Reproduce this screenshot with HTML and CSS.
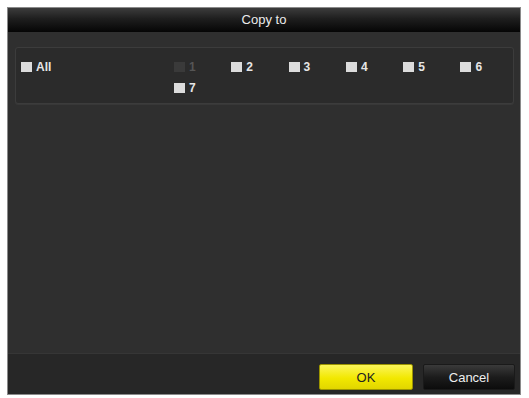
FILE: index.html
```html
<!DOCTYPE html>
<html lang="en">
<head>
    <meta charset="UTF-8">
    <meta name="viewport" content="width=device-width, initial-scale=1.0">
    <title>Copy to</title>
    <link rel="stylesheet" href="styles.css">
</head>
<body>
<div class="dialog">
    <div class="title">Copy to</div>

    <div class="content">
        <div class="panel">
            <label class="check all"><span class="box"></span>All</label>

            <div class="channels">
                <label class="check disabled"><span class="box"></span>1</label>
                <label class="check"><span class="box"></span>2</label>
                <label class="check"><span class="box"></span>3</label>
                <label class="check"><span class="box"></span>4</label>
                <label class="check"><span class="box"></span>5</label>
                <label class="check"><span class="box"></span>6</label>
                <label class="check"><span class="box"></span>7</label>
            </div>
        </div>
    </div>

    <div class="footer">
        <button class="btn ok">OK</button>
        <button class="btn cancel">Cancel</button>
    </div>
</div>
</body>
</html>
```

FILE: styles.css
```css
body {
  margin: 0;
  background-color: #fff;
  font-family: "Liberation Sans", Arial, sans-serif;
}

.dialog {
  margin: 7px 7px 0 7px;
  width: 514px;
  height: 388px;
  display: flex;
  flex-direction: column;
  background-color: #2f2f2f;
  border: 1px solid #8a8a8a;
  box-sizing: border-box;
}

.title {
  height: 24px;
  line-height: 24px;
  text-align: center;
  color: #ececec;
  font-size: 13px;
  background: linear-gradient(to bottom, #3c3c3c 0%, #1e1e1e 45%, #050505 100%);
}

.content {
  flex: 1;
  padding: 15px 6px 0 7px;
}

.panel {
  height: 57px;
  display: flex;
  align-items: flex-start;
  padding: 13px 0 0 5px;
  box-sizing: border-box;
  background-color: #2b2b2b;
  border: 1px solid #3c3c3c;
  border-radius: 3px;
  box-shadow: 0 1px 0 #383838;
}

.all {
  width: 153px;
  flex-shrink: 0;
}

.channels {
  display: grid;
  grid-template-columns: repeat(5, 57.3px) auto;
  grid-auto-rows: 21px;
}

.check {
  display: flex;
  align-items: flex-start;
  height: 12px;
  line-height: 12px;
  color: #e6e6e6;
  font-size: 12px;
  font-weight: bold;
}

.check .box {
  width: 11px;
  height: 10px;
  margin: 1px 4px 0 0;
  background-color: #dcdcdc;
}

.check.disabled {
  color: #555;
}

.check.disabled .box {
  background-color: #3a3a3a;
}

.footer {
  height: 41px;
  display: flex;
  justify-content: flex-end;
  align-items: flex-start;
  gap: 10px;
  padding: 10px 5px 0 0;
  box-sizing: border-box;
  background-color: #272727;
  border-top: 1px solid #363636;
}

.btn {
  width: 94px;
  height: 26px;
  font-family: "Liberation Sans", Arial, sans-serif;
  font-size: 13px;
  border: 1px solid #1a1a1a;
  border-radius: 2px;
  padding: 0;
}

.ok {
  color: #222;
  background: linear-gradient(to bottom, #fbf55a 0%, #f2e800 55%, #e2d600 100%);
  border-color: #9c9400;
}

.cancel {
  width: 92px;
  color: #eee;
  background: linear-gradient(to bottom, #3a3a3a 0%, #1c1c1c 50%, #0c0c0c 100%);
}
```
